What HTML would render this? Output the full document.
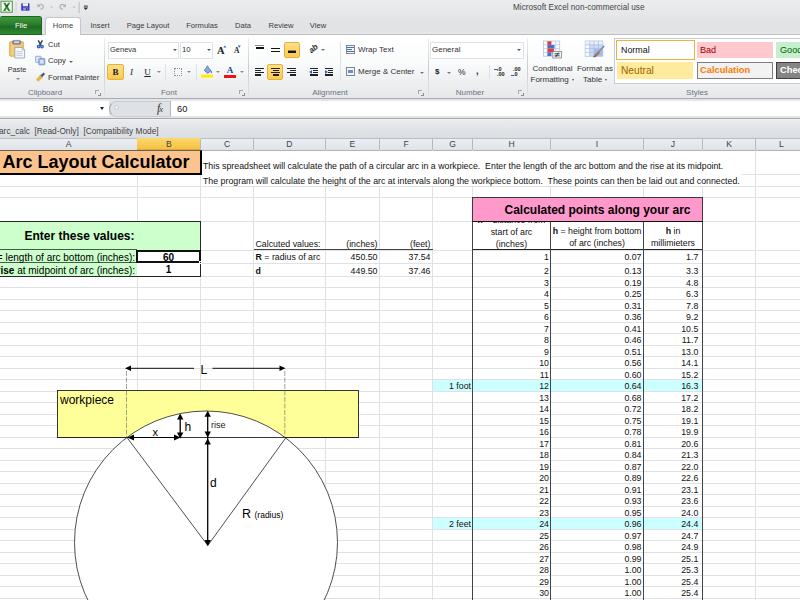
<!DOCTYPE html>
<html><head><meta charset="utf-8"><title>Excel</title>
<style>
*{box-sizing:border-box;margin:0;padding:0}
html,body{width:800px;height:600px;overflow:hidden;background:#fff;font-family:"Liberation Sans",sans-serif;}
#root{position:relative;width:800px;height:600px;overflow:hidden;background:#fff;}
.a{position:absolute;white-space:pre;}
.t{position:absolute;white-space:pre;color:#333;font-size:8px;line-height:10px;}
.c{position:absolute;white-space:pre;color:#111;font-size:8.8px;line-height:11px;}
.r{text-align:right}
.ctr{text-align:center}
.b{font-weight:bold}
.gl{position:absolute;background:#d4d7dc;}
.bk{position:absolute;background:#000;}
</style></head><body><div id="root">

<div class="a" style="left:0;top:0;width:800px;height:16px;background:linear-gradient(#ebeced,#e5e6e8)"></div>
<div class="a" style="left:0;top:16px;width:800px;height:19px;background:linear-gradient(#e4e5e7,#e0e2e4 80%,#e9ebec)"></div>
<div class="a" style="left:0;top:34px;width:800px;height:1px;background:#bcbfc4"></div>
<svg class="a" style="left:0;top:0" width="100" height="15" viewBox="0 0 100 15"><rect x="1" y="1.2" width="11.3" height="11" fill="#f6faf4" stroke="#4f8f4a" stroke-width="1"/><path d="M3.2 2.8 L5.6 2.8 L6.7 5.2 L8 2.8 L10.3 2.8 L7.9 6.8 L10.5 11 L8.1 11 L6.7 8.4 L5.4 11 L3 11 L5.6 6.8 Z" fill="#2e8b2e"/><path d="M5.4 5.6 L6.7 7.6 L8 5.6 L7.4 4.6 L6.7 5.9 L6 4.6Z" fill="#14401a"/><rect x="15.5" y="2" width="1" height="10.5" fill="#cfd2d7"/><rect x="21.2" y="3.2" width="8.3" height="7.6" rx="0.8" fill="#3a3fc0"/><rect x="22.8" y="3.2" width="5.2" height="3" fill="#eef0fb"/><rect x="23.2" y="7.6" width="4.6" height="3.2" fill="#8f96e0"/><rect x="26" y="8.1" width="1.2" height="2.2" fill="#2a2f9a"/><path d="M38.2 6.2 C39.5 3.6 43 3.8 43.2 6.6 C43.3 8.3 42 9.3 40.4 9.2" fill="none" stroke="#b0b4bb" stroke-width="1.3"/><path d="M37.2 3.8 L37.6 7.4 L40.6 6.4 Z" fill="#b0b4bb"/><rect x="50.5" y="6.6" width="2.4" height="1" fill="#b4b8be"/><path d="M65 6.2 C63.7 3.6 60.2 3.8 60 6.6 C59.9 8.3 61.2 9.3 62.8 9.2" fill="none" stroke="#b0b4bb" stroke-width="1.3"/><path d="M66 3.8 L65.6 7.4 L62.6 6.4 Z" fill="#b0b4bb"/><rect x="72.8" y="6.6" width="2.4" height="1" fill="#b4b8be"/><rect x="78.6" y="2" width="1" height="11" fill="#b6b9bf"/><rect x="83.8" y="5.6" width="4" height="1" fill="#2b2b2b"/><path d="M83.4 7.4 L88.2 7.4 L85.8 10 Z" fill="#2b2b2b"/></svg>
<div class="t" style="left:513px;top:3px;font-size:8.2px;color:#444">Microsoft Excel non-commercial use</div>
<div class="a" style="left:0;top:16px;width:42px;height:19px;background:linear-gradient(#3f9a3c,#2a7d2a 45%,#1f6b22 55%,#2f8a30);border-radius:2px 3px 0 0;border:1px solid #1d661f;border-left:none"></div>
<div class="t" style="left:0;top:21px;width:42px;text-align:center;color:#fff;font-size:7.6px">File</div>
<div class="a" style="left:45px;top:17px;width:36px;height:19px;background:#fff;border:1px solid #c3c7cc;border-bottom:none;border-radius:3px 3px 0 0"></div>
<div class="t" style="left:33px;top:21px;width:60px;text-align:center;font-size:7.6px;color:#3b3b3b">Home</div>
<div class="t" style="left:70px;top:21px;width:60px;text-align:center;font-size:7.6px;color:#3b3b3b">Insert</div>
<div class="t" style="left:118px;top:21px;width:60px;text-align:center;font-size:7.6px;color:#3b3b3b">Page Layout</div>
<div class="t" style="left:172px;top:21px;width:60px;text-align:center;font-size:7.6px;color:#3b3b3b">Formulas</div>
<div class="t" style="left:213px;top:21px;width:60px;text-align:center;font-size:7.6px;color:#3b3b3b">Data</div>
<div class="t" style="left:251px;top:21px;width:60px;text-align:center;font-size:7.6px;color:#3b3b3b">Review</div>
<div class="t" style="left:288px;top:21px;width:60px;text-align:center;font-size:7.6px;color:#3b3b3b">View</div>
<div class="a" style="left:0;top:35px;width:800px;height:63px;background:linear-gradient(#ffffff 0%,#fafbfb 45%,#eeeff1 75%,#e6e8ea 100%)"></div>
<div class="a" style="left:0;top:97.6px;width:800px;height:1px;background:#a9adb3"></div>
<div class="a" style="left:104px;top:38px;width:1px;height:57px;background:linear-gradient(#eceef1,#c9cdd3 50%,#dfe2e6)"></div>
<div class="a" style="left:247.5px;top:38px;width:1px;height:57px;background:linear-gradient(#eceef1,#c9cdd3 50%,#dfe2e6)"></div>
<div class="a" style="left:427.5px;top:38px;width:1px;height:57px;background:linear-gradient(#eceef1,#c9cdd3 50%,#dfe2e6)"></div>
<div class="a" style="left:526.5px;top:38px;width:1px;height:57px;background:linear-gradient(#eceef1,#c9cdd3 50%,#dfe2e6)"></div>
<div class="t" style="left:5px;top:87.8px;width:80px;text-align:center;font-size:8px;color:#6d7480">Clipboard</div>
<div class="t" style="left:129px;top:87.8px;width:80px;text-align:center;font-size:8px;color:#6d7480">Font</div>
<div class="t" style="left:290px;top:87.8px;width:80px;text-align:center;font-size:8px;color:#6d7480">Alignment</div>
<div class="t" style="left:430px;top:87.8px;width:80px;text-align:center;font-size:8px;color:#6d7480">Number</div>
<div class="t" style="left:657px;top:87.8px;width:80px;text-align:center;font-size:8px;color:#6d7480">Styles</div>
<div class="a" style="left:95px;top:90px;width:4px;height:4px;border-left:1px solid #a4a8af;border-top:1px solid #a4a8af"></div>
<div class="a" style="left:98px;top:93px;width:2.5px;height:2.5px;border-right:1px solid #8a8f98;border-bottom:1px solid #8a8f98"></div>
<div class="a" style="left:239px;top:90px;width:4px;height:4px;border-left:1px solid #a4a8af;border-top:1px solid #a4a8af"></div>
<div class="a" style="left:242px;top:93px;width:2.5px;height:2.5px;border-right:1px solid #8a8f98;border-bottom:1px solid #8a8f98"></div>
<div class="a" style="left:418px;top:90px;width:4px;height:4px;border-left:1px solid #a4a8af;border-top:1px solid #a4a8af"></div>
<div class="a" style="left:421px;top:93px;width:2.5px;height:2.5px;border-right:1px solid #8a8f98;border-bottom:1px solid #8a8f98"></div>
<div class="a" style="left:518px;top:90px;width:4px;height:4px;border-left:1px solid #a4a8af;border-top:1px solid #a4a8af"></div>
<div class="a" style="left:521px;top:93px;width:2.5px;height:2.5px;border-right:1px solid #8a8f98;border-bottom:1px solid #8a8f98"></div>
<svg class="a" style="left:6px;top:38px" width="24" height="24" viewBox="6 38 24 24"><rect x="9.6" y="41.6" width="13.8" height="14.6" rx="1" fill="#f2c462" stroke="#d9a648" stroke-width="0.8"/><rect x="11" y="43.6" width="11" height="11.6" fill="#f7d58a" opacity="0.6"/><rect x="12.6" y="40.4" width="8" height="3.8" rx="0.8" fill="#8d8fa8" stroke="#6d6f88" stroke-width="0.6"/><rect x="14.2" y="41.4" width="4.8" height="1.6" fill="#d8dae8"/><path d="M14.8 47.4 H22.2 L24.6 49.8 V58 H14.8 Z" fill="#f6f8fb" stroke="#8e9bb3" stroke-width="0.8"/><path d="M22.2 47.4 V49.8 H24.6" fill="#dfe5ee" stroke="#8e9bb3" stroke-width="0.6"/><path d="M16.4 51.6 H22.6 M16.4 53.6 H22.6 M16.4 55.6 H22.6" stroke="#b9c2d2" stroke-width="0.8"/></svg>
<div class="t" style="left:0;top:65px;width:34px;text-align:center;font-size:7.3px">Paste</div>
<div class="a" style="left:15.5px;top:78px;width:0;height:0;border-left:2px solid transparent;border-right:2px solid transparent;border-top:2px solid #888"></div>
<svg class="a" style="left:34px;top:38px" width="14" height="48" viewBox="34 38 14 48"><path d="M38.2 40.4 L41.2 45.6 M42.4 40.4 L39.4 45.6" stroke="#3b4254" stroke-width="1.5" fill="none"/><circle cx="38.6" cy="46.6" r="1.3" fill="#7fa0de" stroke="#2f5fc0" stroke-width="1.1"/><circle cx="42" cy="46.6" r="1.3" fill="#7fa0de" stroke="#2f5fc0" stroke-width="1.1"/><rect x="35.5" y="56.3" width="5.8" height="6" rx="0.6" fill="#dfe8f6" stroke="#8fa6cf" stroke-width="0.9"/><rect x="38.8" y="58.6" width="6" height="6.2" rx="0.6" fill="#a9c0e6" stroke="#6f8fc6" stroke-width="0.9"/><rect x="40.2" y="60" width="3.2" height="3.4" fill="#dbe6f7"/><path d="M40.4 75.6 L43.6 72.6 L45 74 L42 77.2 Z" fill="#4b5264"/><path d="M36 79.6 L39.6 75.4 L42.2 78 L38.2 81.8 Z" fill="#e9b93c"/><path d="M39.6 75.4 L40.4 74.8 L42.8 77.2 L42.2 78 Z" fill="#8a8f9a"/></svg>
<div class="t" style="left:48px;top:40.2px;font-size:7.6px">Cut</div>
<div class="t" style="left:48px;top:56.3px;font-size:7.7px">Copy</div>
<div class="a" style="left:69px;top:60.5px;width:0;height:0;border-left:2px solid transparent;border-right:2px solid transparent;border-top:2px solid #666"></div>
<div class="t" style="left:48px;top:72.8px;font-size:7.75px">Format Painter</div>
<div class="a" style="left:107.5px;top:41.5px;width:71px;height:17px;background:#fff;border:1px solid #dfe2e6"></div>
<div class="t" style="left:110px;top:45px;font-size:7.5px">Geneva</div>
<div class="a" style="left:173px;top:49px;width:0;height:0;border-left:2px solid transparent;border-right:2px solid transparent;border-top:2px solid #555"></div>
<div class="a" style="left:179.5px;top:41.5px;width:33px;height:17px;background:#fff;border:1px solid #dfe2e6"></div>
<div class="t" style="left:182px;top:45px;font-size:7.8px">10</div>
<div class="a" style="left:206.5px;top:49px;width:0;height:0;border-left:2px solid transparent;border-right:2px solid transparent;border-top:2px solid #555"></div>
<svg class="a" style="left:214px;top:42px" width="30" height="16" viewBox="214 42 30 16"><path d="M223.4 47.6 L224.9 45.4 L226.4 47.6 Z" fill="#2f62b8"/><path d="M237.8 45.6 L240.8 45.6 L239.3 47.8 Z" fill="#2f62b8"/></svg>
<div class="a b" style="left:217px;top:44.5px;font-family:'Liberation Serif',serif;font-size:10.5px;line-height:11px;color:#222">A</div>
<div class="a b" style="left:234px;top:47px;font-family:'Liberation Serif',serif;font-size:7.5px;line-height:8px;color:#222">A</div>
<div class="a" style="left:107px;top:64px;width:17px;height:16px;background:linear-gradient(#fde08a,#fbc94f);border:1px solid #e5b13d;border-radius:2px"></div>
<div class="a b" style="left:107px;top:67px;width:17px;text-align:center;font-family:'Liberation Serif',serif;font-size:9px;line-height:10px;color:#222">B</div>
<div class="a" style="left:124px;top:67px;width:15px;text-align:center;font-family:'Liberation Serif',serif;font-style:italic;font-size:9px;line-height:10px;color:#222">I</div>
<div class="a" style="left:140px;top:67px;width:15px;text-align:center;font-family:'Liberation Serif',serif;text-decoration:underline;font-size:9px;line-height:10px;color:#222">U</div>
<div class="a" style="left:157px;top:71px;width:0;height:0;border-left:2px solid transparent;border-right:2px solid transparent;border-top:2px solid #8a8a8a"></div>
<div class="a" style="left:165px;top:64px;width:1px;height:16px;background:#dde0e4"></div>
<div class="a" style="left:174px;top:68px;width:8px;height:8px;border:1px dotted #8a8f98"></div>
<div class="a" style="left:187px;top:71px;width:0;height:0;border-left:2px solid transparent;border-right:2px solid transparent;border-top:2px solid #8a8a8a"></div>
<div class="a" style="left:196px;top:64px;width:1px;height:16px;background:#dde0e4"></div>
<svg class="a" style="left:200px;top:64px" width="44" height="16" viewBox="200 64 44 16"><path d="M204.2 70.2 L207.4 67 L211 70.4 L207.8 73.4 Z" fill="#8fa9dc" stroke="#3f62b0" stroke-width="0.8"/><path d="M206.6 67.4 C206.2 65.6 208.6 65.6 208.4 67.6" fill="none" stroke="#3f62b0" stroke-width="0.8"/><path d="M211 70.4 C212.2 71.4 212 73 211.2 73.2 C210.6 72.6 210.6 71.4 211 70.4Z" fill="#2f55b0"/><rect x="201" y="74.6" width="12" height="3" fill="#ffee00"/><rect x="224" y="75" width="12" height="3" fill="#ea1318"/></svg>
<div class="a" style="left:216px;top:71px;width:0;height:0;border-left:2px solid transparent;border-right:2px solid transparent;border-top:2px solid #8a8a8a"></div>
<div class="a b" style="left:224px;top:65.5px;width:12px;text-align:center;font-size:9px;line-height:9px;color:#23418f;font-family:'Liberation Serif',serif">A</div>
<div class="a" style="left:239.5px;top:71px;width:0;height:0;border-left:2px solid transparent;border-right:2px solid transparent;border-top:2px solid #8a8a8a"></div>
<div class="a" style="left:255px;top:44.6px;width:9px;height:1px;background:#8a8a8a"></div>
<div class="a" style="left:255.5px;top:46.6px;width:8px;height:2px;background:#111"></div>
<div class="a" style="left:271px;top:47.6px;width:9px;height:1.8px;background:#111"></div>
<div class="a" style="left:271px;top:50.6px;width:9px;height:1.8px;background:#111"></div>
<div class="a" style="left:284px;top:42px;width:16px;height:16px;background:linear-gradient(#fde08a,#fbc94f);border:1px solid #e5b13d;border-radius:2px"></div>
<div class="a" style="left:288px;top:49.5px;width:8px;height:1px;background:#9a8240"></div>
<div class="a" style="left:288px;top:51.2px;width:8px;height:2.3px;background:#111"></div>
<div class="a" style="left:309px;top:44px;font-size:8px;line-height:10px;color:#2a2a2a;font-weight:bold;transform:rotate(-40deg);font-style:italic">ab</div>
<div class="a" style="left:321px;top:49px;width:0;height:0;border-left:2px solid transparent;border-right:2px solid transparent;border-top:2px solid #777"></div>
<div class="a" style="left:339.5px;top:42px;width:1px;height:38px;background:#dde0e4"></div>
<div class="a" style="left:255px;top:67.6px;width:9px;height:1.5px;background:#222"></div><div class="a" style="left:255px;top:69.75px;width:6px;height:1.5px;background:#222"></div><div class="a" style="left:255px;top:71.89999999999999px;width:9px;height:1.5px;background:#222"></div><div class="a" style="left:255px;top:74.05px;width:6px;height:1.5px;background:#222"></div>
<div class="a" style="left:267px;top:64px;width:16px;height:16px;background:linear-gradient(#fde08a,#fbc94f);border:1px solid #e5b13d;border-radius:2px"></div>
<div class="a" style="left:271px;top:67.6px;width:9px;height:1.5px;background:#222"></div><div class="a" style="left:272.5px;top:69.75px;width:6px;height:1.5px;background:#222"></div><div class="a" style="left:271px;top:71.89999999999999px;width:9px;height:1.5px;background:#222"></div><div class="a" style="left:272.5px;top:74.05px;width:6px;height:1.5px;background:#222"></div>
<div class="a" style="left:287px;top:67.6px;width:9px;height:1.5px;background:#222"></div><div class="a" style="left:290px;top:69.75px;width:6px;height:1.5px;background:#222"></div><div class="a" style="left:287px;top:71.89999999999999px;width:9px;height:1.5px;background:#222"></div><div class="a" style="left:290px;top:74.05px;width:6px;height:1.5px;background:#222"></div>
<div class="a" style="left:310px;top:67.6px;width:8px;height:1.5px;background:#222"></div><div class="a" style="left:313px;top:69.75px;width:5px;height:1.5px;background:#222"></div><div class="a" style="left:313px;top:71.89999999999999px;width:5px;height:1.5px;background:#222"></div><div class="a" style="left:310px;top:74.05px;width:8px;height:1.5px;background:#222"></div>
<div class="a" style="left:309px;top:70px;width:0;height:0;border-top:2px solid transparent;border-bottom:2px solid transparent;border-right:3px solid #2f62b8"></div>
<div class="a" style="left:325px;top:67.6px;width:8px;height:1.5px;background:#222"></div><div class="a" style="left:328px;top:69.75px;width:5px;height:1.5px;background:#222"></div><div class="a" style="left:328px;top:71.89999999999999px;width:5px;height:1.5px;background:#222"></div><div class="a" style="left:325px;top:74.05px;width:8px;height:1.5px;background:#222"></div>
<div class="a" style="left:325px;top:70px;width:0;height:0;border-top:2px solid transparent;border-bottom:2px solid transparent;border-left:3px solid #2f62b8"></div>
<div class="a" style="left:346px;top:45px;width:9px;height:9px;border:1px solid #7f8793;background:#f2f5f9"></div>
<div class="a" style="left:347px;top:47px;width:7px;height:1px;background:#4a6fb0"></div><div class="a" style="left:347px;top:49px;width:5px;height:1px;background:#4a6fb0"></div><div class="a" style="left:347px;top:51px;width:7px;height:1px;background:#4a6fb0"></div>
<div class="t" style="left:358px;top:45px;">Wrap Text</div>
<div class="a" style="left:346px;top:67px;width:9px;height:9px;border:1px solid #7f8793;background:#f2f5f9"></div>
<div class="a" style="left:348px;top:70px;width:5px;height:3px;background:#6a8fc4"></div>
<div class="t" style="left:358px;top:67px;">Merge &amp; Center</div>
<div class="a" style="left:420px;top:72px;width:0;height:0;border-left:2px solid transparent;border-right:2px solid transparent;border-top:2px solid #777"></div>
<div class="a" style="left:430px;top:41.5px;width:94px;height:17px;background:#fff;border:1px solid #dfe2e6"></div>
<div class="t" style="left:432px;top:45px;">General</div>
<div class="a" style="left:517px;top:49px;width:0;height:0;border-left:2px solid transparent;border-right:2px solid transparent;border-top:2px solid #555"></div>
<div class="t b" style="left:435px;top:67px;font-size:8px;color:#222">$</div>
<div class="a" style="left:447px;top:72px;width:0;height:0;border-left:2px solid transparent;border-right:2px solid transparent;border-top:2px solid #777"></div>
<div class="t" style="left:458px;top:67px;font-size:8.5px;color:#222">%</div>
<div class="t b" style="left:476px;top:66px;font-size:9px;color:#222">,</div>
<div class="a" style="left:488.5px;top:65px;width:1px;height:14px;background:#dde0e4"></div>
<div class="t b" style="left:497px;top:66.5px;font-size:5.5px;line-height:5px;color:#111">.0
.00</div>
<div class="a" style="left:494px;top:69px;width:3.5px;height:1.2px;background:#2f62b8"></div>
<div class="t b" style="left:513px;top:66.5px;font-size:5.5px;line-height:5px;color:#111">.00
.0</div>
<div class="a" style="left:510.5px;top:74.5px;width:3.5px;height:1.2px;background:#2f62b8"></div>
<svg class="a" style="left:540px;top:38px" width="70" height="24" viewBox="540 38 70 24"><rect x="543.5" y="41" width="16.2" height="15.2" fill="#fbfcfe" stroke="#b4c4e2" stroke-width="0.8"/><line x1="547.55" y1="41" x2="547.55" y2="56.2" stroke="#b4c4e2" stroke-width="0.7"/><line x1="543.5" y1="44.8" x2="559.7" y2="44.8" stroke="#b4c4e2" stroke-width="0.7"/><line x1="551.6" y1="41" x2="551.6" y2="56.2" stroke="#b4c4e2" stroke-width="0.7"/><line x1="543.5" y1="48.6" x2="559.7" y2="48.6" stroke="#b4c4e2" stroke-width="0.7"/><line x1="555.65" y1="41" x2="555.65" y2="56.2" stroke="#b4c4e2" stroke-width="0.7"/><line x1="543.5" y1="52.4" x2="559.7" y2="52.4" stroke="#b4c4e2" stroke-width="0.7"/><rect x="547.5" y="41.3" width="3.8" height="3.6" fill="#e8392e"/><rect x="547.5" y="45" width="7" height="3.5" fill="#4472d0"/><rect x="547.5" y="48.7" width="6.5" height="3.6" fill="#e8392e"/><rect x="547.5" y="52.4" width="3.8" height="3.6" fill="#4472d0"/><rect x="552.8" y="51.4" width="8.6" height="6.6" fill="#f3f5f8" stroke="#7b8494" stroke-width="0.8"/><path d="M554.6 53.8 H559.6 M554.6 55.8 H559.6 M558.6 52.6 L555.6 57" stroke="#2a2f38" stroke-width="0.9" fill="none"/><rect x="585.2" y="41" width="17.6" height="15.2" fill="#c9d9f6" stroke="#a9bde4" stroke-width="0.8"/><rect x="585.6" y="41.4" width="4.2" height="14.4" fill="#f8fafe"/><rect x="585.6" y="41.4" width="16.8" height="3.4" fill="#e9effb"/><rect x="594" y="48.8" width="8.4" height="7" fill="#9fb9ee"/><line x1="589.6" y1="41" x2="589.6" y2="56.2" stroke="#a9bde4" stroke-width="0.7"/><line x1="585.2" y1="44.8" x2="602.8" y2="44.8" stroke="#a9bde4" stroke-width="0.7"/><line x1="594.0" y1="41" x2="594.0" y2="56.2" stroke="#a9bde4" stroke-width="0.7"/><line x1="585.2" y1="48.6" x2="602.8" y2="48.6" stroke="#a9bde4" stroke-width="0.7"/><line x1="598.4000000000001" y1="41" x2="598.4000000000001" y2="56.2" stroke="#a9bde4" stroke-width="0.7"/><line x1="585.2" y1="52.4" x2="602.8" y2="52.4" stroke="#a9bde4" stroke-width="0.7"/><path d="M603.8 46.4 L598.2 52.4" stroke="#8b8f98" stroke-width="1.6" stroke-linecap="round"/><path d="M598.6 51.2 L600 52.8 L596 57 L593 57.2 L594.6 54.6 Z" fill="#a5764a"/><path d="M593 57.2 L596 57 L595 55.8 Z" fill="#3f68c0"/></svg>
<div class="t" style="left:526px;top:64px;width:53px;text-align:center;">Conditional</div>
<div class="t" style="left:530.5px;top:74.6px;">Formatting</div>
<div class="a" style="left:571.5px;top:79px;width:0;height:0;border-left:1.5px solid transparent;border-right:1.5px solid transparent;border-top:2px solid #555"></div>
<div class="t" style="left:572px;top:64px;width:46px;text-align:center;">Format as</div>
<div class="t" style="left:583px;top:74.6px;">Table</div>
<div class="a" style="left:604.5px;top:79px;width:0;height:0;border-left:1.5px solid transparent;border-right:1.5px solid transparent;border-top:2px solid #555"></div>
<div class="a" style="left:614px;top:38px;width:190px;height:46px;background:#fff;border:1px solid #c9cdd3"></div>
<div class="a" style="left:616px;top:40px;width:79px;height:20px;background:#fff;border:1.5px solid #e9b23e"></div>
<div class="t" style="left:621px;top:45px;font-size:8.9px;color:#111">Normal</div>
<div class="a" style="left:697px;top:42px;width:76px;height:16px;background:#ffc7ce"></div>
<div class="t" style="left:700px;top:45px;font-size:9.1px;color:#9c0006">Bad</div>
<div class="a" style="left:776px;top:42px;width:30px;height:16px;background:#c6efce"></div>
<div class="t" style="left:780px;top:45px;font-size:9.1px;color:#006100">Good</div>
<div class="a" style="left:617px;top:62px;width:76px;height:17px;background:#ffeb9c"></div>
<div class="t" style="left:621px;top:65.6px;font-size:10.2px;color:#9c6500">Neutral</div>
<div class="a" style="left:697px;top:62px;width:76px;height:17px;background:#f2f2f2;border:1px solid #7f7f7f"></div>
<div class="t b" style="left:700px;top:65px;font-size:9.3px;color:#fa7d00">Calculation</div>
<div class="a" style="left:776px;top:62px;width:30px;height:17px;background:#858585;border:1.5px solid #3f3f3f"></div>
<div class="t b" style="left:780px;top:65px;font-size:9.3px;color:#fff">Check</div>
<div class="a" style="left:0;top:98.6px;width:800px;height:22px;background:#e3e5e8"></div>
<div class="a" style="left:0;top:101.2px;width:109px;height:15.3px;background:#fff"></div>
<div class="t" style="left:0;top:103.5px;width:96px;text-align:center;font-size:8.6px;color:#111">B6</div>
<div class="a" style="left:99.8px;top:107.3px;width:0;height:0;border-left:2.5px solid transparent;border-right:2.5px solid transparent;border-top:3px solid #222"></div>
<div class="a" style="left:109px;top:100.5px;width:62px;height:16.5px;background:#dee1e5;border:1px solid #a4a8af;border-right:none;border-top-color:#c9ccd1;border-bottom-color:#c9ccd1;border-radius:8px 0 0 8px"></div>
<div class="a" style="left:113.5px;top:104.5px;width:5px;height:5px;border-radius:3px;background:#eceef0;border:0.5px solid #c9ccd1"></div>
<div class="a" style="left:157px;top:101.8px;font-family:'Liberation Serif',serif;font-style:italic;font-size:11.5px;line-height:12px;color:#333">f<span style="font-size:8.5px;margin-left:-1px">x</span></div>
<div class="a" style="left:169.5px;top:101.2px;width:631px;height:15.3px;background:#fff;border-left:1px solid #b4b8be"></div>
<div class="t" style="left:177px;top:103.7px;font-size:9.3px;color:#111">60</div>
<div class="a" style="left:0;top:118.4px;width:800px;height:1px;background:#a5a9af"></div>
<div class="a" style="left:0;top:119.4px;width:800px;height:1px;background:#f0f1f3"></div>
<div class="a" style="left:0;top:120.4px;width:800px;height:17.2px;background:linear-gradient(#e9ebed,#dadde1)"></div>
<div class="t" style="left:-1px;top:125.8px;font-size:8.3px;color:#444">arc_calc  [Read-Only]  [Compatibility Mode]</div>
<div class="a" style="left:0;top:137.5px;width:800px;height:12.5px;background:linear-gradient(#edeff2,#dfe3e8)"></div>
<div class="a" style="left:0;top:137.5px;width:800px;height:1px;background:#b9bdc4"></div>
<div class="a" style="left:0;top:149.5px;width:800px;height:1px;background:#aeb3bb"></div>
<div class="a" style="left:136.5px;top:138.5px;width:1px;height:11.5px;background:#b5bac2"></div>
<div class="t" style="left:58.5px;top:139.0px;width:20px;text-align:center;font-size:8.6px;color:#3c4250">A</div>
<div class="a" style="left:137px;top:137.5px;width:63.5px;height:12.5px;background:linear-gradient(#fbd86e,#f6c144);border-bottom:1px solid #d9a93a"></div>
<div class="a" style="left:200.0px;top:138.5px;width:1px;height:11.5px;background:#b5bac2"></div>
<div class="t" style="left:158.75px;top:139.0px;width:20px;text-align:center;font-size:8.6px;color:#3c4250">B</div>
<div class="a" style="left:253.0px;top:138.5px;width:1px;height:11.5px;background:#b5bac2"></div>
<div class="t" style="left:217.0px;top:139.0px;width:20px;text-align:center;font-size:8.6px;color:#3c4250">C</div>
<div class="a" style="left:324.5px;top:138.5px;width:1px;height:11.5px;background:#b5bac2"></div>
<div class="t" style="left:279.25px;top:139.0px;width:20px;text-align:center;font-size:8.6px;color:#3c4250">D</div>
<div class="a" style="left:379.0px;top:138.5px;width:1px;height:11.5px;background:#b5bac2"></div>
<div class="t" style="left:342.25px;top:139.0px;width:20px;text-align:center;font-size:8.6px;color:#3c4250">E</div>
<div class="a" style="left:432.0px;top:138.5px;width:1px;height:11.5px;background:#b5bac2"></div>
<div class="t" style="left:396.0px;top:139.0px;width:20px;text-align:center;font-size:8.6px;color:#3c4250">F</div>
<div class="a" style="left:472.0px;top:138.5px;width:1px;height:11.5px;background:#b5bac2"></div>
<div class="t" style="left:442.5px;top:139.0px;width:20px;text-align:center;font-size:8.6px;color:#3c4250">G</div>
<div class="a" style="left:550.0px;top:138.5px;width:1px;height:11.5px;background:#b5bac2"></div>
<div class="t" style="left:501.5px;top:139.0px;width:20px;text-align:center;font-size:8.6px;color:#3c4250">H</div>
<div class="a" style="left:643.0px;top:138.5px;width:1px;height:11.5px;background:#b5bac2"></div>
<div class="t" style="left:587.0px;top:139.0px;width:20px;text-align:center;font-size:8.6px;color:#3c4250">I</div>
<div class="a" style="left:702.0px;top:138.5px;width:1px;height:11.5px;background:#b5bac2"></div>
<div class="t" style="left:663.0px;top:139.0px;width:20px;text-align:center;font-size:8.6px;color:#3c4250">J</div>
<div class="a" style="left:755.0px;top:138.5px;width:1px;height:11.5px;background:#b5bac2"></div>
<div class="t" style="left:719.0px;top:139.0px;width:20px;text-align:center;font-size:8.6px;color:#3c4250">K</div>
<div class="a" style="left:819.5px;top:138.5px;width:1px;height:11.5px;background:#b5bac2"></div>
<div class="t" style="left:771.5px;top:139.0px;width:20px;text-align:center;font-size:8.6px;color:#3c4250">L</div>
<div class="a" style="left:0;top:174.0px;width:800px;height:1px;background:#e0e1e4"></div>
<div class="a" style="left:0;top:186.0px;width:800px;height:1px;background:#e0e1e4"></div>
<div class="a" style="left:0;top:197.0px;width:800px;height:1px;background:#e0e1e4"></div>
<div class="a" style="left:0;top:221.0px;width:800px;height:1px;background:#e0e1e4"></div>
<div class="a" style="left:0;top:249.5px;width:800px;height:1px;background:#e0e1e4"></div>
<div class="a" style="left:0;top:262.5px;width:800px;height:1px;background:#e0e1e4"></div>
<div class="a" style="left:0;top:276.0px;width:800px;height:1px;background:#e0e1e4"></div>
<div class="a" style="left:0;top:287.0px;width:800px;height:1px;background:#e0e1e4"></div>
<div class="a" style="left:0;top:298.5px;width:800px;height:1px;background:#e0e1e4"></div>
<div class="a" style="left:0;top:310.0px;width:800px;height:1px;background:#e0e1e4"></div>
<div class="a" style="left:0;top:321.5px;width:800px;height:1px;background:#e0e1e4"></div>
<div class="a" style="left:0;top:333.0px;width:800px;height:1px;background:#e0e1e4"></div>
<div class="a" style="left:0;top:344.5px;width:800px;height:1px;background:#e0e1e4"></div>
<div class="a" style="left:0;top:356.0px;width:800px;height:1px;background:#e0e1e4"></div>
<div class="a" style="left:0;top:367.5px;width:800px;height:1px;background:#e0e1e4"></div>
<div class="a" style="left:0;top:379.0px;width:800px;height:1px;background:#e0e1e4"></div>
<div class="a" style="left:0;top:390.5px;width:800px;height:1px;background:#e0e1e4"></div>
<div class="a" style="left:0;top:402.0px;width:800px;height:1px;background:#e0e1e4"></div>
<div class="a" style="left:0;top:413.5px;width:800px;height:1px;background:#e0e1e4"></div>
<div class="a" style="left:0;top:425.0px;width:800px;height:1px;background:#e0e1e4"></div>
<div class="a" style="left:0;top:436.5px;width:800px;height:1px;background:#e0e1e4"></div>
<div class="a" style="left:0;top:448.0px;width:800px;height:1px;background:#e0e1e4"></div>
<div class="a" style="left:0;top:459.5px;width:800px;height:1px;background:#e0e1e4"></div>
<div class="a" style="left:0;top:471.0px;width:800px;height:1px;background:#e0e1e4"></div>
<div class="a" style="left:0;top:482.5px;width:800px;height:1px;background:#e0e1e4"></div>
<div class="a" style="left:0;top:494.0px;width:800px;height:1px;background:#e0e1e4"></div>
<div class="a" style="left:0;top:505.5px;width:800px;height:1px;background:#e0e1e4"></div>
<div class="a" style="left:0;top:517.0px;width:800px;height:1px;background:#e0e1e4"></div>
<div class="a" style="left:0;top:528.5px;width:800px;height:1px;background:#e0e1e4"></div>
<div class="a" style="left:0;top:540.0px;width:800px;height:1px;background:#e0e1e4"></div>
<div class="a" style="left:0;top:551.5px;width:800px;height:1px;background:#e0e1e4"></div>
<div class="a" style="left:0;top:563.0px;width:800px;height:1px;background:#e0e1e4"></div>
<div class="a" style="left:0;top:574.5px;width:800px;height:1px;background:#e0e1e4"></div>
<div class="a" style="left:0;top:586.0px;width:800px;height:1px;background:#e0e1e4"></div>
<div class="a" style="left:0;top:597.5px;width:800px;height:1px;background:#e0e1e4"></div>
<div class="a" style="left:136.5px;top:150px;width:1px;height:460px;background:#e0e1e4"></div>
<div class="a" style="left:200.0px;top:150px;width:1px;height:460px;background:#e0e1e4"></div>
<div class="a" style="left:253.0px;top:150px;width:1px;height:460px;background:#e0e1e4"></div>
<div class="a" style="left:324.5px;top:150px;width:1px;height:460px;background:#e0e1e4"></div>
<div class="a" style="left:379.0px;top:150px;width:1px;height:460px;background:#e0e1e4"></div>
<div class="a" style="left:432.0px;top:150px;width:1px;height:460px;background:#e0e1e4"></div>
<div class="a" style="left:472.0px;top:150px;width:1px;height:460px;background:#e0e1e4"></div>
<div class="a" style="left:550.0px;top:150px;width:1px;height:460px;background:#e0e1e4"></div>
<div class="a" style="left:643.0px;top:150px;width:1px;height:460px;background:#e0e1e4"></div>
<div class="a" style="left:702.0px;top:150px;width:1px;height:460px;background:#e0e1e4"></div>
<div class="a" style="left:755.0px;top:150px;width:1px;height:460px;background:#e0e1e4"></div>
<div class="a" style="left:819.5px;top:150px;width:1px;height:460px;background:#e0e1e4"></div>
<div class="a" style="left:0;top:150px;width:201.8px;height:24.6px;background:#fcc48c;border-top:1px solid #6b6257;border-right:2px solid #000;border-bottom:2px solid #000"></div>
<div class="a b" style="left:2.5px;top:152.2px;width:196px;font-size:18px;line-height:21px;color:#000">Arc Layout Calculator</div>
<div class="a" style="left:202px;top:150.5px;width:540px;height:25.0px;background:#fff"></div>
<div class="a" style="left:202px;top:175.0px;width:540px;height:1px;background:#eff0f2"></div>
<div class="a" style="left:201px;top:175.0px;width:541px;height:11.0px;background:#fff"></div>
<div class="c" style="left:203px;top:160.5px;">This spreadsheet will calculate the path of a circular arc in a workpiece.  Enter the length of the arc bottom and the rise at its midpoint.</div>
<div class="c" style="left:203px;top:175.6px;">The program will calculate the height of the arc at intervals along the workpiece bottom.  These points can then be laid out and connected.</div>
<div class="a" style="left:0;top:220.8px;width:200.5px;height:55.999999999999986px;background:#ccffcc;border:1px solid #2a2a2a;border-left:none"></div>
<div class="a" style="left:0;top:248.7px;width:137px;height:0.9px;background:#4a5a4a"></div>
<div class="a" style="left:0;top:261.8px;width:137px;height:0.9px;background:#4a5a4a"></div>
<div class="a b" style="left:0;top:228.70000000000002px;width:159px;text-align:center;font-size:12px;line-height:14px;color:#000">Enter these values:</div>
<div class="a" style="left:-20px;top:251.8px;width:155px;text-align:right;font-size:10px;line-height:12px;color:#000"><b>L</b> = length of arc bottom (inches):</div>
<div class="a" style="left:-20px;top:264.7px;width:155px;text-align:right;font-size:10px;line-height:12px;color:#000"><b>rise</b> at midpoint of arc (inches):</div>
<div class="a" style="left:137px;top:250px;width:64px;height:26.8px;background:#fff;border:1px solid #222;border-left:none"></div>
<div class="a" style="left:136.3px;top:249.7px;width:65px;height:13.8px;border:2px solid #111"></div>
<div class="a" style="left:199.2px;top:261.2px;width:3.2px;height:3.2px;background:#111;border:0.5px solid #fff"></div>
<div class="a b" style="left:137px;top:251.5px;width:63px;text-align:center;font-size:10px;line-height:12px;color:#000">60</div>
<div class="a b" style="left:137px;top:264px;width:63px;text-align:center;font-size:10px;line-height:12px;color:#000">1</div>
<div class="a" style="left:253.5px;top:248.8px;width:179px;height:1px;background:#444"></div>
<div class="c " style="left:255.5px;top:239.4px;width:67.5px;">Calcuted values:</div>
<div class="c r" style="left:327px;top:239.4px;width:50.5px;">(inches)</div>
<div class="c r" style="left:381.5px;top:239.4px;width:49.0px;">(feet)</div>
<div class="c " style="left:255.5px;top:252.4px;width:67.5px;"><b>R</b> = radius of arc</div>
<div class="c r" style="left:327px;top:252.4px;width:50.5px;">450.50</div>
<div class="c r" style="left:381.5px;top:252.4px;width:49.0px;">37.54</div>
<div class="c " style="left:255.5px;top:265.9px;width:67.5px;"><b>d</b></div>
<div class="c r" style="left:327px;top:265.9px;width:50.5px;">449.50</div>
<div class="c r" style="left:381.5px;top:265.9px;width:49.0px;">37.46</div>
<div class="a" style="left:472.0px;top:197.0px;width:231.0px;height:25.0px;background:#ff99cc;border:1px solid #3a3a3a;border-bottom-color:#111"></div>
<div class="a b ctr" style="left:492.5px;top:202.5px;width:210.0px;font-size:12px;line-height:14px;color:#000">Calculated points along your arc</div>
<div class="a" style="left:472.5px;top:222.0px;width:230.0px;height:28.0px;background:#fff;border-bottom:1px solid #222"></div>
<div class="a" style="left:473.5px;top:222.0px;width:76.0px;height:27.5px;overflow:hidden"><div class="c ctr" style="left:0;top:-8.3px;width:100%;line-height:12px"><b>x</b> = distance from
start of arc
(inches)</div></div>
<div class="c ctr" style="left:550.5px;top:225.0px;width:93.0px;line-height:12px"><b>h</b> = height from bottom
of arc (inches)</div>
<div class="c ctr" style="left:643.5px;top:225.0px;width:59.0px;line-height:12px"><b>h</b> in
millimieters</div>
<div class="a" style="left:432.5px;top:379.5px;width:270.0px;height:11.5px;background:#ccffff"></div>
<div class="c r" style="left:434.0px;top:381.2px;width:37.0px;">1 foot</div>
<div class="a" style="left:432.5px;top:517.5px;width:270.0px;height:11.5px;background:#ccffff"></div>
<div class="c r" style="left:434.0px;top:519.2px;width:37.0px;">2 feet</div>
<div class="a" style="left:472.0px;top:221.5px;width:1px;height:400px;background:#444"></div>
<div class="a" style="left:550.0px;top:221.5px;width:1px;height:400px;background:#444"></div>
<div class="a" style="left:643.0px;top:221.5px;width:1px;height:400px;background:#444"></div>
<div class="a" style="left:702.0px;top:221.5px;width:1px;height:400px;background:#444"></div>
<div class="c r" style="left:474.0px;top:252.4px;width:75.0px;">1</div>
<div class="c r" style="left:552.5px;top:252.4px;width:89.0px;">0.07</div>
<div class="c r" style="left:647.7px;top:252.4px;width:50.6px;">1.7</div>
<div class="c r" style="left:474.0px;top:265.9px;width:75.0px;">2</div>
<div class="c r" style="left:552.5px;top:265.9px;width:89.0px;">0.13</div>
<div class="c r" style="left:647.7px;top:265.9px;width:50.6px;">3.3</div>
<div class="c r" style="left:474.0px;top:277.7px;width:75.0px;">3</div>
<div class="c r" style="left:552.5px;top:277.7px;width:89.0px;">0.19</div>
<div class="c r" style="left:647.7px;top:277.7px;width:50.6px;">4.8</div>
<div class="c r" style="left:474.0px;top:289.2px;width:75.0px;">4</div>
<div class="c r" style="left:552.5px;top:289.2px;width:89.0px;">0.25</div>
<div class="c r" style="left:647.7px;top:289.2px;width:50.6px;">6.3</div>
<div class="c r" style="left:474.0px;top:300.7px;width:75.0px;">5</div>
<div class="c r" style="left:552.5px;top:300.7px;width:89.0px;">0.31</div>
<div class="c r" style="left:647.7px;top:300.7px;width:50.6px;">7.8</div>
<div class="c r" style="left:474.0px;top:312.2px;width:75.0px;">6</div>
<div class="c r" style="left:552.5px;top:312.2px;width:89.0px;">0.36</div>
<div class="c r" style="left:647.7px;top:312.2px;width:50.6px;">9.2</div>
<div class="c r" style="left:474.0px;top:323.7px;width:75.0px;">7</div>
<div class="c r" style="left:552.5px;top:323.7px;width:89.0px;">0.41</div>
<div class="c r" style="left:647.7px;top:323.7px;width:50.6px;">10.5</div>
<div class="c r" style="left:474.0px;top:335.2px;width:75.0px;">8</div>
<div class="c r" style="left:552.5px;top:335.2px;width:89.0px;">0.46</div>
<div class="c r" style="left:647.7px;top:335.2px;width:50.6px;">11.7</div>
<div class="c r" style="left:474.0px;top:346.7px;width:75.0px;">9</div>
<div class="c r" style="left:552.5px;top:346.7px;width:89.0px;">0.51</div>
<div class="c r" style="left:647.7px;top:346.7px;width:50.6px;">13.0</div>
<div class="c r" style="left:474.0px;top:358.2px;width:75.0px;">10</div>
<div class="c r" style="left:552.5px;top:358.2px;width:89.0px;">0.56</div>
<div class="c r" style="left:647.7px;top:358.2px;width:50.6px;">14.1</div>
<div class="c r" style="left:474.0px;top:369.7px;width:75.0px;">11</div>
<div class="c r" style="left:552.5px;top:369.7px;width:89.0px;">0.60</div>
<div class="c r" style="left:647.7px;top:369.7px;width:50.6px;">15.2</div>
<div class="c r" style="left:474.0px;top:381.2px;width:75.0px;">12</div>
<div class="c r" style="left:552.5px;top:381.2px;width:89.0px;">0.64</div>
<div class="c r" style="left:647.7px;top:381.2px;width:50.6px;">16.3</div>
<div class="c r" style="left:474.0px;top:392.7px;width:75.0px;">13</div>
<div class="c r" style="left:552.5px;top:392.7px;width:89.0px;">0.68</div>
<div class="c r" style="left:647.7px;top:392.7px;width:50.6px;">17.2</div>
<div class="c r" style="left:474.0px;top:404.2px;width:75.0px;">14</div>
<div class="c r" style="left:552.5px;top:404.2px;width:89.0px;">0.72</div>
<div class="c r" style="left:647.7px;top:404.2px;width:50.6px;">18.2</div>
<div class="c r" style="left:474.0px;top:415.7px;width:75.0px;">15</div>
<div class="c r" style="left:552.5px;top:415.7px;width:89.0px;">0.75</div>
<div class="c r" style="left:647.7px;top:415.7px;width:50.6px;">19.1</div>
<div class="c r" style="left:474.0px;top:427.2px;width:75.0px;">16</div>
<div class="c r" style="left:552.5px;top:427.2px;width:89.0px;">0.78</div>
<div class="c r" style="left:647.7px;top:427.2px;width:50.6px;">19.9</div>
<div class="c r" style="left:474.0px;top:438.7px;width:75.0px;">17</div>
<div class="c r" style="left:552.5px;top:438.7px;width:89.0px;">0.81</div>
<div class="c r" style="left:647.7px;top:438.7px;width:50.6px;">20.6</div>
<div class="c r" style="left:474.0px;top:450.2px;width:75.0px;">18</div>
<div class="c r" style="left:552.5px;top:450.2px;width:89.0px;">0.84</div>
<div class="c r" style="left:647.7px;top:450.2px;width:50.6px;">21.3</div>
<div class="c r" style="left:474.0px;top:461.7px;width:75.0px;">19</div>
<div class="c r" style="left:552.5px;top:461.7px;width:89.0px;">0.87</div>
<div class="c r" style="left:647.7px;top:461.7px;width:50.6px;">22.0</div>
<div class="c r" style="left:474.0px;top:473.2px;width:75.0px;">20</div>
<div class="c r" style="left:552.5px;top:473.2px;width:89.0px;">0.89</div>
<div class="c r" style="left:647.7px;top:473.2px;width:50.6px;">22.6</div>
<div class="c r" style="left:474.0px;top:484.7px;width:75.0px;">21</div>
<div class="c r" style="left:552.5px;top:484.7px;width:89.0px;">0.91</div>
<div class="c r" style="left:647.7px;top:484.7px;width:50.6px;">23.1</div>
<div class="c r" style="left:474.0px;top:496.2px;width:75.0px;">22</div>
<div class="c r" style="left:552.5px;top:496.2px;width:89.0px;">0.93</div>
<div class="c r" style="left:647.7px;top:496.2px;width:50.6px;">23.6</div>
<div class="c r" style="left:474.0px;top:507.7px;width:75.0px;">23</div>
<div class="c r" style="left:552.5px;top:507.7px;width:89.0px;">0.95</div>
<div class="c r" style="left:647.7px;top:507.7px;width:50.6px;">24.0</div>
<div class="c r" style="left:474.0px;top:519.2px;width:75.0px;">24</div>
<div class="c r" style="left:552.5px;top:519.2px;width:89.0px;">0.96</div>
<div class="c r" style="left:647.7px;top:519.2px;width:50.6px;">24.4</div>
<div class="c r" style="left:474.0px;top:530.7px;width:75.0px;">25</div>
<div class="c r" style="left:552.5px;top:530.7px;width:89.0px;">0.97</div>
<div class="c r" style="left:647.7px;top:530.7px;width:50.6px;">24.7</div>
<div class="c r" style="left:474.0px;top:542.2px;width:75.0px;">26</div>
<div class="c r" style="left:552.5px;top:542.2px;width:89.0px;">0.98</div>
<div class="c r" style="left:647.7px;top:542.2px;width:50.6px;">24.9</div>
<div class="c r" style="left:474.0px;top:553.7px;width:75.0px;">27</div>
<div class="c r" style="left:552.5px;top:553.7px;width:89.0px;">0.99</div>
<div class="c r" style="left:647.7px;top:553.7px;width:50.6px;">25.1</div>
<div class="c r" style="left:474.0px;top:565.2px;width:75.0px;">28</div>
<div class="c r" style="left:552.5px;top:565.2px;width:89.0px;">1.00</div>
<div class="c r" style="left:647.7px;top:565.2px;width:50.6px;">25.3</div>
<div class="c r" style="left:474.0px;top:576.7px;width:75.0px;">29</div>
<div class="c r" style="left:552.5px;top:576.7px;width:89.0px;">1.00</div>
<div class="c r" style="left:647.7px;top:576.7px;width:50.6px;">25.4</div>
<div class="c r" style="left:474.0px;top:588.2px;width:75.0px;">30</div>
<div class="c r" style="left:552.5px;top:588.2px;width:89.0px;">1.00</div>
<div class="c r" style="left:647.7px;top:588.2px;width:50.6px;">25.4</div>
<div class="c r" style="left:474.0px;top:599.7px;width:75.0px;">31</div>
<div class="c r" style="left:552.5px;top:599.7px;width:89.0px;">1.00</div>
<div class="c r" style="left:647.7px;top:599.7px;width:50.6px;">25.4</div>
<svg class="a" style="left:0;top:340px" width="420" height="260" viewBox="0 340 420 260"><rect x="57.5" y="390.5" width="301" height="47" fill="#ffff99" stroke="#222" stroke-width="0.9"/><circle cx="206.0" cy="542.5" r="131.5" fill="#fff" stroke="#222" stroke-width="0.8"/><line x1="57.5" y1="437.5" x2="358.5" y2="437.5" stroke="#222" stroke-width="0.9"/><line x1="126.5" y1="371" x2="126.5" y2="437.5" stroke="#666" stroke-width="0.6" stroke-dasharray="5,1.5"/><line x1="284.8" y1="371" x2="284.8" y2="437.5" stroke="#666" stroke-width="0.6" stroke-dasharray="5,1.5"/><line x1="127" y1="368.3" x2="194" y2="368.3" stroke="#111" stroke-width="1"/><line x1="212.5" y1="368.3" x2="284" y2="368.3" stroke="#111" stroke-width="1"/><polygon points="125,368.3 131,365.5 131,371.1" fill="#000"/><polygon points="285.5,368.3 279.5,365.5 279.5,371.1" fill="#000"/><line x1="127.0" y1="437.5" x2="207.8" y2="545.5" stroke="#222" stroke-width="0.8"/><line x1="286.0" y1="437.5" x2="207.8" y2="545.5" stroke="#222" stroke-width="0.8"/><line x1="207.7" y1="412" x2="207.7" y2="544.5" stroke="#000" stroke-width="1.3"/><polygon points="207.7,410.8 204.5,416.8 210.89999999999998,416.8" fill="#000"/><polygon points="207.7,437.5 204.5,431.5 210.89999999999998,431.5" fill="#000"/><polygon points="207.7,438.5 204.5,444.5 210.89999999999998,444.5" fill="#000"/><polygon points="207.7,546.0 204.5,540.0 210.89999999999998,540.0" fill="#000"/><line x1="180.2" y1="415" x2="180.2" y2="437.5" stroke="#000" stroke-width="1.3"/><polygon points="180.2,413.5 177.0,419.5 183.39999999999998,419.5" fill="#000"/><polygon points="180.2,438.5 177.0,432.5 183.39999999999998,432.5" fill="#000"/><line x1="128" y1="437.5" x2="180" y2="437.5" stroke="#000" stroke-width="1.2"/><polygon points="127.5,437.5 134.0,434.5 134.0,440.5" fill="#000"/><polygon points="180.5,437.5 174.0,434.5 174.0,440.5" fill="#000"/></svg>
<div class="a" style="left:60px;top:392.5px;font-size:12px;line-height:14px;color:#000">workpiece</div>
<div class="a" style="left:200.5px;top:362.5px;font-size:12px;line-height:14px;color:#000">L</div>
<div class="a" style="left:152.5px;top:426px;font-size:11px;line-height:13px;color:#000">x</div>
<div class="a" style="left:184.5px;top:419.5px;font-size:12px;line-height:14px;color:#000">h</div>
<div class="a" style="left:211px;top:419.5px;font-size:9px;line-height:11px;color:#222">rise</div>
<div class="a" style="left:210px;top:475.5px;font-size:12px;line-height:14px;color:#000">d</div>
<div class="a" style="left:242px;top:506.5px;font-size:12.5px;line-height:15px;color:#000">R <span style="font-size:8.5px">(radius)</span></div>
</div></body></html>
